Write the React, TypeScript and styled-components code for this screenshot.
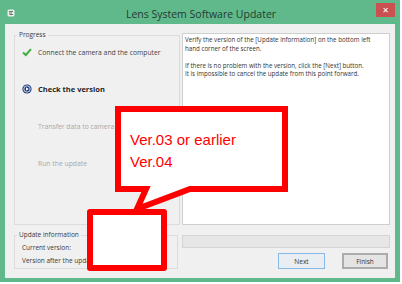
import styled, { createGlobalStyle } from "styled-components"

const GlobalStyle = createGlobalStyle`
  html, body {
    margin: 0;
    padding: 0;
    background: #ffffff;
  }
  body {
    font-family: "Open Sans", "Noto Sans", sans-serif;
    color: #333333;
  }
`

type StepState = "done" | "current" | "todo"

const steps: { label: string; state: StepState }[] = [
  { label: "Connect the camera and the computer", state: "done" },
  { label: "Check the version", state: "current" },
  { label: "Transfer data to camera", state: "todo" },
  { label: "Run the update", state: "todo" },
]

const messageLines = [
  "Verify the version of the [Update information] on the bottom left",
  "hand corner of the screen.",
  "",
  "If there is no problem with the version, click the [Next] button.",
  "It is impossible to cancel the update from this point forward.",
]

const Style = {
  Page: styled.div`
    position: relative;
    width: 402px;
    height: 284px;
    overflow: hidden;
    background: #ffffff;
  `,
  Window: styled.div`
    width: 400px;
    height: 282px;
    background: #5fb98b;
    display: flex;
    flex-direction: column;
  `,
  TitleBar: styled.div`
    height: 24px;
    box-sizing: border-box;
    padding: 3px 5px 0 7px;
    display: grid;
    grid-template-columns: 1fr auto 1fr;
    align-items: start;
  `,
  AppIcon: styled.svg`
    margin-top: 6px;
    width: 8px;
    height: 8px;
  `,
  Title: styled.div`
    margin-top: 3px;
    line-height: 16px;
    font-size: 10.5px;
    color: #263a30;
    white-space: nowrap;
  `,
  CloseButton: styled.div`
    justify-self: end;
    width: 19px;
    height: 14px;
    background: #c9514f;
    color: #ffffff;
    font-family: "DejaVu Sans", sans-serif;
    font-size: 8px;
    display: flex;
    align-items: center;
    justify-content: center;
  `,
  Body: styled.div`
    flex: 1;
    margin: 0 5px 4px 5px;
    padding: 9px 5px 9px 9px;
    background: #f0f0f0;
    display: grid;
    grid-template-columns: 166px 208px;
    grid-template-rows: 192px 1fr;
    column-gap: 2px;
    row-gap: 8px;
  `,
  Group: styled.fieldset<{ $trim?: number }>`
    margin: 0 ${(p) => p.$trim ?? 0}px 0 0;
    padding: 0;
    border: 1px solid #dcdcdc;
    min-width: 0;
  `,
  Legend: styled.legend`
    margin-left: 2px;
    padding: 0 2px;
    font-size: 6.5px;
    line-height: 4px;
    color: #3a3a3a;
  `,
  StepList: styled.div`
    padding: 9px 0 0 7px;
    display: flex;
    flex-direction: column;
    gap: 25px;
  `,
  Step: styled.div<{ $state: StepState }>`
    height: 12px;
    display: flex;
    align-items: center;
    gap: 6px;
    font-size: ${(p) => (p.$state === "current" ? "7.5px" : "6.8px")};
    font-weight: ${(p) => (p.$state === "current" ? 700 : 400)};
    color: ${(p) =>
      p.$state === "current" ? "#262626" : p.$state === "done" ? "#444444" : "#a8a8a8"};
    white-space: nowrap;
  `,
  StepIcon: styled.svg`
    width: 10px;
    height: 10px;
    flex: none;
  `,
  MessageBox: styled.div`
    background: #ffffff;
    border: 1px solid #cfcfcf;
    padding: 2px 2px;
    font-size: 6.2px;
    line-height: 8.6px;
    color: #333333;
    white-space: nowrap;
    overflow: hidden;
  `,
  InfoRows: styled.div`
    padding: 7px 0 0 7px;
    display: flex;
    flex-direction: column;
    gap: 5px;
  `,
  InfoRow: styled.div`
    height: 8px;
    line-height: 8px;
    font-size: 6.5px;
    color: #3a3a3a;
    white-space: nowrap;
  `,
  Footer: styled.div`
    padding-top: 2px;
    display: flex;
    flex-direction: column;
    gap: 5px;
  `,
  ProgressBar: styled.div`
    height: 13px;
    box-sizing: border-box;
    background: #e6e6e6;
    border: 1px solid #d4d4d4;
  `,
  ButtonRow: styled.div`
    display: flex;
    justify-content: flex-end;
    gap: 17px;
    padding-right: 2px;
  `,
  Button: styled.div<{ $default?: boolean }>`
    width: ${(p) => (p.$default ? 47 : 46)}px;
    height: 16px;
    box-sizing: border-box;
    border: ${(p) => (p.$default ? "1px solid #86b9e8" : "2px solid #acacac")};
    background: ${(p) => (p.$default ? "#e9eef3" : "#e4e4e4")};
    font-size: 6.5px;
    color: #333333;
    display: flex;
    align-items: center;
    justify-content: center;
  `,
  Callout: styled.div`
    position: absolute;
    left: 115px;
    top: 106px;
    width: 173px;
    height: 110px;
  `,
  CalloutShape: styled.svg`
    position: absolute;
    inset: 0;
    width: 173px;
    height: 110px;
  `,
  CalloutText: styled.div`
    position: relative;
    padding: 23px 0 0 15px;
    font-family: "Liberation Sans", Arial, sans-serif;
    font-size: 15px;
    line-height: 22px;
    color: #ff0000;
    white-space: nowrap;
  `,
  Highlight: styled.div`
    position: absolute;
    left: 87px;
    top: 209px;
    width: 80px;
    height: 62px;
    box-sizing: border-box;
    border: 6px solid #ff0000;
    border-radius: 3px;
    background: #ffffff;
  `,
}

function StepGlyph({ state }: { state: StepState }) {
  if (state === "done") {
    return (
      <Style.StepIcon viewBox="0 0 10 10">
        <path d="M1 5.4 L3.8 8 L9 2.2" fill="none" stroke="#3fae3a" strokeWidth="2" />
      </Style.StepIcon>
    )
  }
  if (state === "current") {
    return (
      <Style.StepIcon viewBox="0 0 10 10">
        <circle cx="5" cy="5" r="4.6" fill="#1c3a7a" />
        <circle cx="5" cy="5" r="3.2" fill="none" stroke="#ffffff" strokeWidth="0.8" />
        <path d="M4 3.3 L6.8 5 L4 6.7 Z" fill="#ffffff" />
      </Style.StepIcon>
    )
  }
  return <Style.StepIcon viewBox="0 0 10 10" />
}

export default function App() {
  return (
    <>
      <GlobalStyle />
      <Style.Page>
        <Style.Window>
          <Style.TitleBar>
            <Style.AppIcon viewBox="0 0 8 8">
              <rect x="0.5" y="0.5" width="7" height="7" rx="1.5" fill="#e8efe9" />
              <path d="M2 2.5 H6 M2 4 H5 M2.5 5.5 H6" stroke="#5a6a62" strokeWidth="0.9" />
            </Style.AppIcon>
            <Style.Title>Lens System Software Updater</Style.Title>
            <Style.CloseButton>✕</Style.CloseButton>
          </Style.TitleBar>
          <Style.Body>
            <Style.Group>
              <Style.Legend>Progress</Style.Legend>
              <Style.StepList>
                {steps.map((s) => (
                  <Style.Step key={s.label} $state={s.state}>
                    <StepGlyph state={s.state} />
                    {s.label}
                  </Style.Step>
                ))}
              </Style.StepList>
            </Style.Group>
            <Style.MessageBox>
              {messageLines.map((line, i) => (
                <div key={i}>{line || "\u00a0"}</div>
              ))}
            </Style.MessageBox>
            <Style.Group $trim={2}>
              <Style.Legend>Update information</Style.Legend>
              <Style.InfoRows>
                <Style.InfoRow>Current version:</Style.InfoRow>
                <Style.InfoRow>Version after the update:</Style.InfoRow>
              </Style.InfoRows>
            </Style.Group>
            <Style.Footer>
              <Style.ProgressBar />
              <Style.ButtonRow>
                <Style.Button $default>Next</Style.Button>
                <Style.Button>Finish</Style.Button>
              </Style.ButtonRow>
            </Style.Footer>
          </Style.Body>
        </Style.Window>

        <Style.Callout>
          <Style.CalloutShape viewBox="0 0 173 110">
            <path
              d="M3 3 H170 V83 H75 L22 103 L31 83 H3 Z"
              fill="#ffffff"
              stroke="#ff0000"
              strokeWidth="6"
              strokeLinejoin="miter"
              strokeMiterlimit="10"
            />
          </Style.CalloutShape>
          <Style.CalloutText>
            Ver.03 or earlier
            <br />
            Ver.04
          </Style.CalloutText>
        </Style.Callout>
        <Style.Highlight />
      </Style.Page>
    </>
  )
}
